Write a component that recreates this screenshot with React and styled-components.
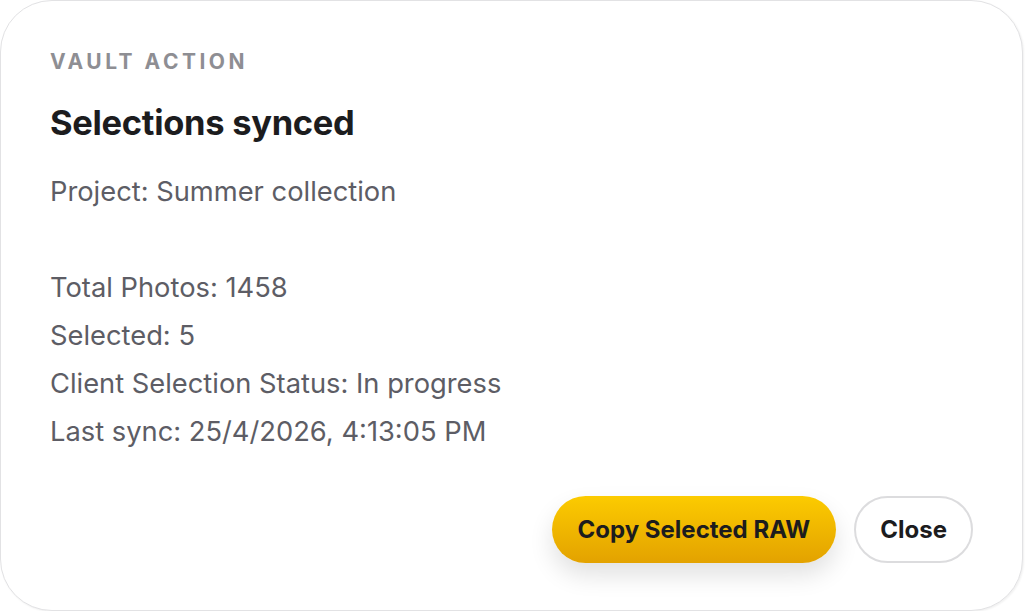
import styled, { createGlobalStyle } from "styled-components";

const GlobalStyle = createGlobalStyle`
  html, body {
    margin: 0;
    padding: 0;
    background: #ffffff;
  }
  body {
    font-family: Inter, "Liberation Sans", sans-serif;
    -webkit-font-smoothing: antialiased;
  }
`

const Card = styled.div`
  box-sizing: border-box;
  width: 1023px;
  height: 611px;
  background: #ffffff;
  border: 1px solid #e2e2e4;
  border-radius: 52px;
  box-shadow: 1px 1px 2px rgba(0, 0, 0, 0.06);
  padding: 47px 49px 47px 49px;
  display: flex;
  flex-direction: column;
`

const Eyebrow = styled.div`
  font-size: 21px;
  font-weight: 700;
  letter-spacing: 3.5px;
  color: #8e8e93;
  line-height: 28px;
`

const Title = styled.h1`
  margin: 25px 0 0;
  font-size: 34.5px;
  font-weight: 700;
  color: #1c1c1e;
  line-height: 44px;
  letter-spacing: -0.3px;
`

const Details = styled.div`
  margin-top: 23px;
  font-size: 27.3px;
  color: #5d5d65;
  line-height: 48px;
`

const Line = styled.div`
  min-height: 48px;
`

const Actions = styled.div`
  margin-top: auto;
  display: flex;
  justify-content: flex-end;
  gap: 18px;
`

const Button = styled.button`
  height: 67px;
  padding: 0 ${props => props.$primary ? 26 : 24}px;
  border-radius: 34px;
  font-family: inherit;
  font-size: 24px;
  font-weight: 700;
  color: #1c1c1e;
  cursor: pointer;
  ${props => props.$primary ? `
    border: none;
    background: linear-gradient(180deg, #fccb00 0%, #e3a200 100%);
    box-shadow: 0 12px 24px rgba(0, 0, 0, 0.12);
  ` : `
    border: 2px solid #dcdcde;
    background: #ffffff;
  `}
`

const lines = [
  "Project: Summer collection",
  "",
  "Total Photos: 1458",
  "Selected: 5",
  "Client Selection Status: In progress",
  "Last sync: 25/4/2026, 4:13:05 PM",
]

export default function App() {
  return (
    <>
      <GlobalStyle />
      <Card>
        <Eyebrow>VAULT ACTION</Eyebrow>
        <Title>Selections synced</Title>
        <Details>
          {lines.map((text, i) => (
            <Line key={i}>{text}</Line>
          ))}
        </Details>
        <Actions>
          <Button $primary>Copy Selected RAW</Button>
          <Button>Close</Button>
        </Actions>
      </Card>
    </>
  )
}
